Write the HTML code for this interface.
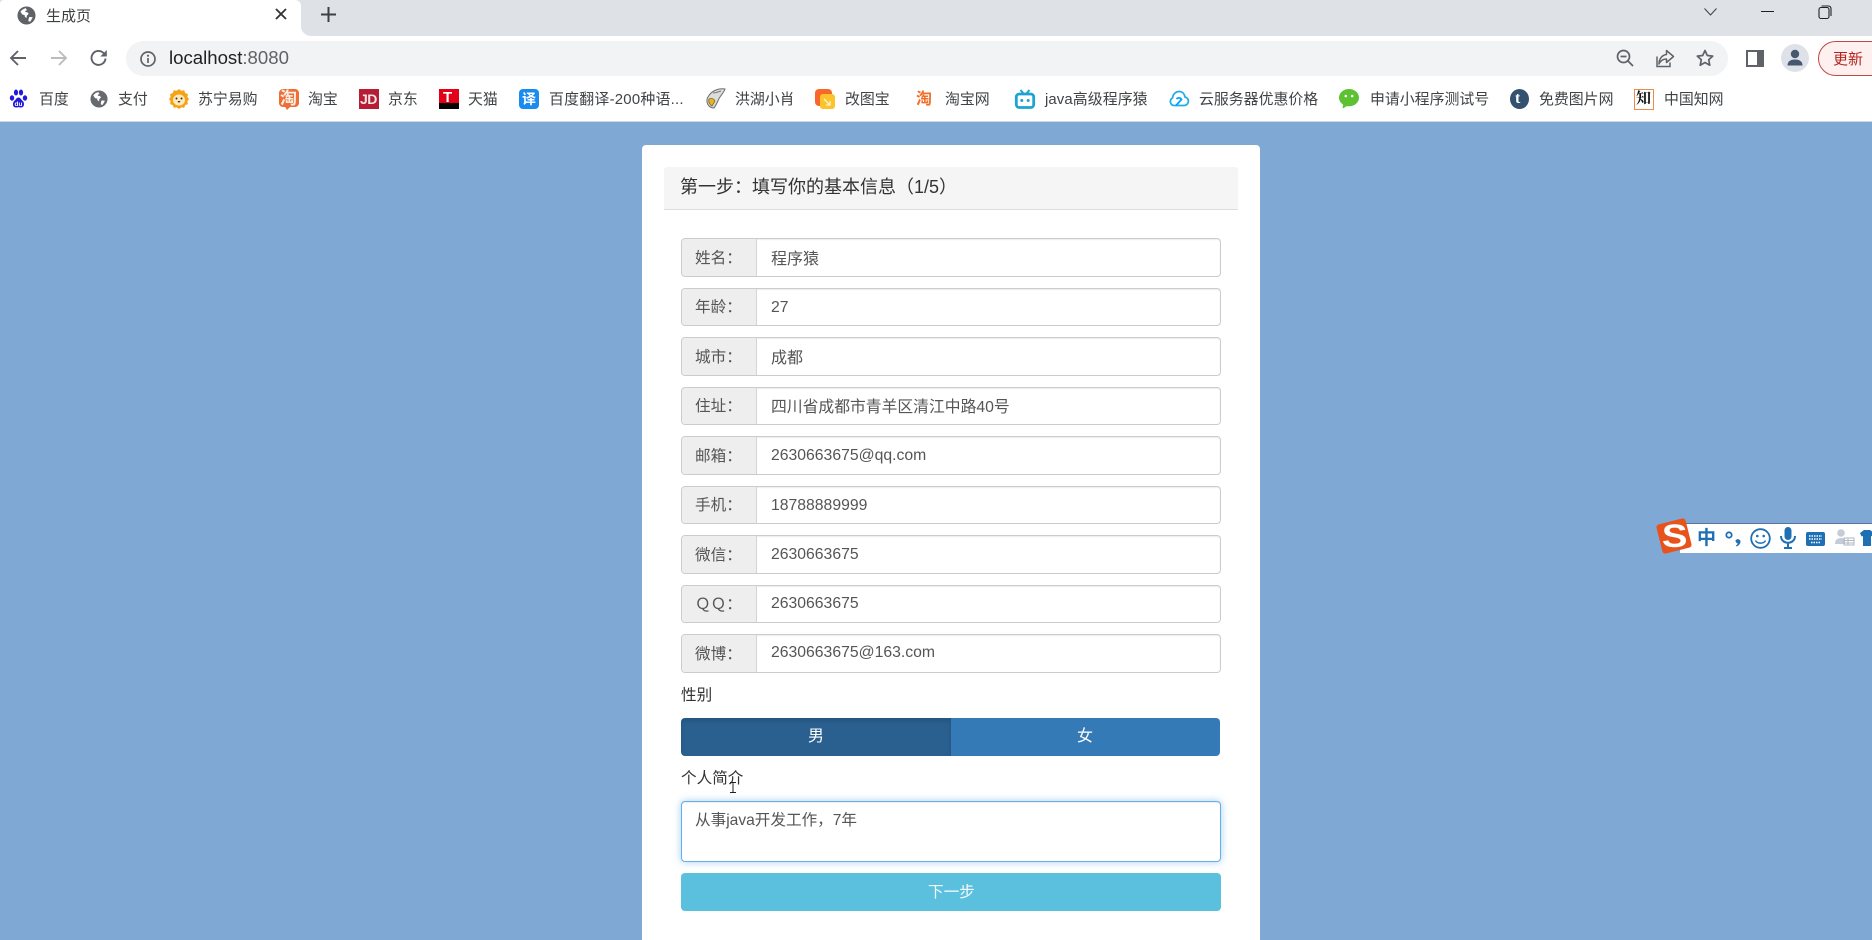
<!DOCTYPE html>
<html lang="zh">
<head>
<meta charset="utf-8">
<title>生成页</title>
<style>
html,body{margin:0;padding:0;width:1872px;height:940px;overflow:hidden}
body{position:relative;background:#7fa9d4;font-family:"Liberation Sans","Noto Sans CJK SC",sans-serif;color:#333}
.a{position:absolute}
.t{position:absolute;white-space:nowrap;line-height:1}
svg{position:absolute;overflow:visible}
.bm{position:absolute;top:91px;font-size:14.9px;line-height:18px;color:#3f4346;white-space:nowrap}
.row{position:absolute;left:681px;width:538px;background:#fff;border:1px solid #ccc;border-radius:4px;box-shadow:inset 0 1px 1px rgba(0,0,0,.075)}
.lab{position:absolute;left:0;top:0;bottom:0;width:74px;background:#eee;border-right:1px solid #d4d4d4;border-radius:3px 0 0 3px}
.lab span{position:absolute;left:13px;top:calc(50% + 1px);transform:translateY(-50%);font-size:15.6px;line-height:20px;color:#555;white-space:nowrap}
.val{position:absolute;left:89px;top:50%;transform:translateY(-50%);font-size:16px;line-height:20px;color:#555;white-space:nowrap}
.n{font-size:15.75px}
</style>
</head>
<body>
<!-- tab strip -->
<div class="a" style="left:0;top:0;width:1872px;height:36px;background:#dee1e6"></div>
<div class="a" style="left:0;top:0;width:301px;height:36px;background:#fff;border-radius:4px 6px 0 0"></div>
<div class="a" style="left:301px;top:26px;width:10px;height:10px;background:#fff"></div>
<div class="a" style="left:301px;top:26px;width:10px;height:10px;background:#dee1e6;border-radius:0 0 0 10px"></div>
<!-- toolbar -->
<div class="a" style="left:0;top:36px;width:1872px;height:86px;background:#fff"></div>
<div class="a" style="left:126px;top:41px;width:1602px;height:35px;background:#f1f3f4;border-radius:18px"></div>
<div class="a" style="left:0;top:121px;width:1872px;height:1px;background:#d0d8e2"></div>

<!-- tab content -->
<svg style="left:17px;top:6px" width="19" height="19" viewBox="0 0 20 20"><circle cx="10" cy="10" r="9.5" fill="#5f6368"/><path d="M9 2.2C7 3 5 4 3.6 6l2 3 2.4.6.3 1.800 1.800 1.200.2-2.400 2-2-1.400-1.600-2.200-.2L9 5l1.600-.6z M13 11.500l3.600.4-2.600 4.600-2-.4.2-2.600z" fill="#fff"/></svg>
<span class="t" style="left:46px;top:9px;font-size:15px;color:#3c4043">生成页</span>
<svg style="left:275px;top:8px" width="12" height="12" viewBox="0 0 12 12"><path d="M1 1l10 10M11 1L1 11" stroke="#303134" stroke-width="1.800" fill="none"/></svg>
<svg style="left:321px;top:7px" width="15" height="15" viewBox="0 0 15 15"><path d="M7.500 0v15M0 7.500h15" stroke="#3c4043" stroke-width="2" fill="none"/></svg>

<!-- window controls -->
<svg style="left:1704px;top:8px" width="13" height="8" viewBox="0 0 13 8"><path d="M.5.500l6 6.500 6-6.500" stroke="#3c4043" stroke-width="1" fill="none"/></svg>
<div class="a" style="left:1761px;top:11px;width:13px;height:1px;background:#202124"></div>
<svg style="left:1818px;top:5px" width="14" height="14" viewBox="0 0 14 14"><rect x="1" y="2.500" width="10" height="11" rx="2" fill="none" stroke="#202124" stroke-width="1.100"/><path d="M3.500 1h7a2.500 2.500 0 0 1 2.500 2.500V11" fill="none" stroke="#202124" stroke-width="1.100"/></svg>

<!-- nav -->
<svg style="left:9px;top:49px" width="18" height="18" viewBox="0 0 18 18"><path d="M17 9H2M9 2L2 9l7 7" stroke="#5f6368" stroke-width="1.900" fill="none"/></svg>
<svg style="left:50px;top:49px" width="18" height="18" viewBox="0 0 18 18"><path d="M1 9h15M9 2l7 7-7 7" stroke="#babcbe" stroke-width="1.900" fill="none"/></svg>
<svg style="left:90px;top:49px" width="18" height="18" viewBox="0 0 18 18"><path d="M15.500 9.500A7 7 0 1 1 13.500 4L16 6.500" stroke="#5f6368" stroke-width="1.900" fill="none"/><path d="M16.800 1v6.500h-6.500z" fill="#5f6368"/></svg>
<svg style="left:140px;top:51px" width="16" height="16" viewBox="0 0 16 16"><circle cx="8" cy="8" r="7" fill="none" stroke="#5f6368" stroke-width="1.700"/><path d="M8 7v5" stroke="#5f6368" stroke-width="1.700"/><circle cx="8" cy="4.700" r="1.100" fill="#5f6368"/></svg>
<span class="t" style="left:169px;top:48px;font-size:18.600px;line-height:20px;color:#202124">localhost<span style="color:#5f6368">:8080</span></span>

<svg style="left:1616px;top:49px" width="18" height="18" viewBox="0 0 18 18"><circle cx="7.500" cy="7.500" r="6" fill="none" stroke="#5f6368" stroke-width="1.700"/><path d="M4.500 7.500h6M12 12l5 5" stroke="#5f6368" stroke-width="1.700" fill="none"/></svg>
<svg style="left:1656px;top:49px" width="19" height="19" viewBox="0 0 19 19"><path d="M1 7.500V17.500h13v-4" fill="none" stroke="#5f6368" stroke-width="1.500"/><path d="M10.500 1.500l7 6-7 6V10C7 10 4.500 11.500 3 15c0-5 3-9 7.500-9.500z" fill="none" stroke="#5f6368" stroke-width="1.500" stroke-linejoin="round"/></svg>
<svg style="left:1696px;top:49px" width="18" height="18" viewBox="0 0 18 18"><path d="M9 1.500l2.300 5 5.400.6-4 3.700 1.100 5.400L9 13.500l-4.800 2.700 1.100-5.400-4-3.700 5.400-.6z" fill="none" stroke="#5f6368" stroke-width="1.700" stroke-linejoin="round"/></svg>
<svg style="left:1746px;top:50px" width="18" height="17" viewBox="0 0 18 17"><rect width="18" height="17" fill="#5f6368"/><rect x="2" y="2" width="9" height="13" fill="#fff"/></svg>
<div class="a" style="left:1781px;top:44px;width:28px;height:28px;border-radius:50%;background:#dfe1e8"></div>
<svg style="left:1787px;top:49px" width="16" height="17" viewBox="0 0 16 17"><circle cx="8" cy="5" r="4.200" fill="#45586f"/><path d="M.5 16.500c0-4.500 3.500-6 7.500-6s7.500 1.500 7.500 6z" fill="#45586f"/></svg>
<div class="a" style="left:1818px;top:41px;width:80px;height:33px;border:1px solid #bd4b45;border-radius:18px;background:#fdf0ef"></div>
<span class="t" style="left:1833px;top:52px;font-size:15px;color:#b3261e">更新</span>

<!-- bookmarks -->
<svg style="left:9px;top:89px" width="19" height="20" viewBox="0 0 19 20" fill="#2319dc"><ellipse cx="3" cy="9" rx="2.200" ry="2.700"/><ellipse cx="7" cy="3.500" rx="2.100" ry="3"/><ellipse cx="12" cy="3.500" rx="2.100" ry="3"/><ellipse cx="16" cy="9" rx="2.200" ry="2.700"/><path d="M9.500 8.500c-2 0-2.500 2-4 3.300-2 1.500-2.500 6.700 1.500 6.700 1 0 1.500-.4 2.500-.4s1.500.4 2.500.4c4 0 3.500-5.200 1.500-6.700-1.500-1.300-2-3.300-4-3.300z"/><text x="9.500" y="17" font-size="6.500" font-weight="700" fill="#fff" text-anchor="middle" font-family="Liberation Sans">du</text></svg>
<span class="bm" style="left:39px">百度</span>
<svg style="left:90px;top:90px" width="18" height="18" viewBox="0 0 20 20"><circle cx="10" cy="10" r="9.500" fill="#66696d"/><path d="M9 2.200C7 3 5 4 3.600 6l2 3 2.400.6.300 1.800 1.800 1.200.2-2.400 2-2-1.400-1.600-2.200-.2L9 5l1.600-.6z M13 11.500l3.600.4-2.600 4.600-2-.4.2-2.600z" fill="#fff"/></svg>
<span class="bm" style="left:118px">支付</span>
<svg style="left:169px;top:89px" width="20" height="20" viewBox="0 0 20 20"><path d="M10 0l2.300 1.800 2.900-.5 1 2.700 2.700 1.100-.5 2.900L20 10l-1.600 2.200.5 2.900-2.700 1-1 2.700-2.900-.4L10 20l-2.300-1.600-2.900.4-1-2.700-2.700-1 .5-2.900L0 10l1.600-2 -.5-2.900L3.800 4l1-2.700 2.900.5z" fill="#f5a314"/><ellipse cx="10" cy="11" rx="6" ry="5.500" fill="#fce9c0"/><circle cx="7.500" cy="9.500" r="1" fill="#4a3000"/><circle cx="12.500" cy="9.500" r="1" fill="#4a3000"/><path d="M8.500 12h3l-1.500 2z" fill="#4a3000"/></svg>
<span class="bm" style="left:198px">苏宁易购</span>
<div class="a" style="left:279px;top:89px;width:20px;height:18px;border-radius:4px;background:#ee6f35"></div>
<svg style="left:284px;top:105px" width="8" height="5" viewBox="0 0 8 5"><path d="M0 0h8L3 5z" fill="#ee6f35"/></svg>
<span class="t" style="left:280px;top:90px;font-size:17px;font-weight:700;color:#fdeee5">淘</span>
<span class="bm" style="left:308px">淘宝</span>
<div class="a" style="left:359px;top:89px;width:20px;height:20px;background:#b71d34"></div>
<span class="t" style="left:360px;top:92px;font-size:14px;font-weight:700;color:#f5e4e6;letter-spacing:-.5px">JD</span>
<span class="bm" style="left:388px">京东</span>
<div class="a" style="left:439px;top:89px;width:20px;height:14px;background:#e40019"></div>
<div class="a" style="left:439px;top:103px;width:20px;height:6px;background:#050505"></div>
<span class="t" style="left:443px;top:90px;font-size:15px;font-weight:700;color:#fff">T</span>
<span class="bm" style="left:468px">天猫</span>
<div class="a" style="left:519px;top:89px;width:20px;height:20px;border-radius:4px;background:#1a8cf0"></div>
<span class="t" style="left:522px;top:92px;font-size:14px;font-weight:700;color:#fff">译</span>
<span class="bm" style="left:549px;letter-spacing:.25px">百度翻译-200种语...</span>
<svg style="left:705px;top:88px" width="21" height="21" viewBox="0 0 21 21"><path d="M20 1C13 0 6 3 3 9c-2 3-1 7 1 9 1 1 3 2 5 2 3-4 4-8 6-11 2-3 4-5 5-8z" fill="#dcdcdc" stroke="#6b6b6b" stroke-width="1"/><path d="M4 11c3-1 5 0 6 2l-3 5c-2-1-4-4-3-7z" fill="#e8b521" stroke="#6b5a10" stroke-width=".7"/><path d="M8 5c2 0 5-1 8-2" stroke="#777" fill="none"/></svg>
<span class="bm" style="left:735px">洪湖小肖</span>
<div class="a" style="left:815px;top:89px;width:17px;height:17px;border-radius:4px;background:#f9682a"></div>
<div class="a" style="left:820px;top:94px;width:15px;height:15px;border-radius:3px;background:#fcc42c"></div>
<svg style="left:823px;top:98px" width="9" height="9" viewBox="0 0 9 9"><path d="M1 1l6 6M7 3v4H3" stroke="#fff2c8" stroke-width="1.300" fill="none"/></svg>
<span class="bm" style="left:845px">改图宝</span>
<span class="t" style="left:916px;top:92px;font-size:16px;font-weight:700;color:#f0702a">淘</span>
<span class="bm" style="left:945px">淘宝网</span>
<svg style="left:1015px;top:89px" width="20" height="20" viewBox="0 0 20 20"><path d="M5.500 1l3 3.500M14.500 1l-3 3.500" stroke="#1ba4d3" stroke-width="2"/><rect x="1.300" y="5" width="17.400" height="13.500" rx="3" fill="#fff" stroke="#1ba4d3" stroke-width="2.800"/><circle cx="6.800" cy="11.500" r="1.500" fill="#1ba4d3"/><circle cx="13.200" cy="11.500" r="1.500" fill="#1ba4d3"/></svg>
<span class="bm" style="left:1045px;letter-spacing:.1px">java高级程序猿</span>
<svg style="left:1169px;top:90px" width="20" height="17" viewBox="0 0 20 17"><path d="M5 15.500A4 4 0 0 1 3.500 8C4 4 7 1.500 10 1.500c3.500 0 5.500 2.500 6 5.500a4.300 4.300 0 0 1-1 8.500z" fill="none" stroke="#23ade5" stroke-width="1.800"/><path d="M7 15.500l5.500-6a3 3 0 0 0-5-.5" fill="none" stroke="#00a4ff" stroke-width="1.800"/></svg>
<span class="bm" style="left:1199px">云服务器优惠价格</span>
<svg style="left:1339px;top:89px" width="20" height="20" viewBox="0 0 20 20"><path d="M10 0C4.500 0 0 3.800 0 8.600c0 3 1.700 5.400 4.200 7l-.7 4 4.200-2.500c.8.200 1.500.2 2.300.2 5.500 0 10-3.900 10-8.700S15.500 0 10 0z" fill="#5cc232"/><circle cx="6.800" cy="7" r="1.300" fill="#fff"/><circle cx="13.200" cy="7" r="1.300" fill="#fff"/></svg>
<span class="bm" style="left:1370px">申请小程序测试号</span>
<div class="a" style="left:1510px;top:89px;width:19px;height:20px;border-radius:50%;background:#34526f"></div>
<span class="t" style="left:1515px;top:91px;font-size:16px;font-weight:700;color:#fff;font-family:'Liberation Serif',serif">t</span>
<span class="bm" style="left:1539px">免费图片网</span>
<div class="a" style="left:1634px;top:89px;width:18px;height:19px;border:1px solid #ee8a4b;background:#fff"></div>
<span class="t" style="left:1636px;top:92px;font-size:15px;font-weight:700;color:#111;font-family:'Liberation Serif','Noto Serif CJK SC',serif">知</span>
<span class="bm" style="left:1664px">中国知网</span>

<!-- card -->
<div class="a" style="left:642px;top:145px;width:618px;height:795px;background:#fff;border-radius:4px 4px 0 0"></div>
<div class="a" style="left:664px;top:167px;width:574px;height:42px;background:#f5f5f5;border-bottom:1px solid #ddd;border-radius:3px 3px 0 0"></div>
<span class="t" style="left:680px;top:177px;font-size:18px;line-height:20px;color:#333">第一步：填写你的基本信息（1/5）</span>

<div class="row" style="top:238px;height:37px"><div class="lab"><span>姓名：</span></div><span class="val" style="margin-top:2px">程序猿</span></div>
<div class="row" style="top:288px;height:36px"><div class="lab"><span>年龄：</span></div><span class="val n" style="margin-top:1px">27</span></div>
<div class="row" style="top:337px;height:37px"><div class="lab"><span>城市：</span></div><span class="val" style="margin-top:2px">成都</span></div>
<div class="row" style="top:387px;height:36px"><div class="lab"><span>住址：</span></div><span class="val" style="font-size:15.800px;margin-top:2px">四川省成都市青羊区清江中路40号</span></div>
<div class="row" style="top:436px;height:37px"><div class="lab"><span>邮箱：</span></div><span class="val n" style="margin-top:0">2630663675@qq.com</span></div>
<div class="row" style="top:486px;height:36px"><div class="lab"><span>手机：</span></div><span class="val n" style="margin-top:1px">18788889999</span></div>
<div class="row" style="top:535px;height:37px"><div class="lab"><span>微信：</span></div><span class="val n" style="margin-top:0">2630663675</span></div>
<div class="row" style="top:585px;height:36px"><div class="lab"><span>ＱＱ：</span></div><span class="val n">2630663675</span></div>
<div class="row" style="top:634px;height:37px"><div class="lab"><span>微博：</span></div><span class="val n" style="margin-top:-1px">2630663675@163.com</span></div>

<span class="t" style="left:681px;top:686px;font-size:15.600px;line-height:20px;color:#333">性别</span>
<div class="a" style="left:681px;top:718px;width:270px;height:38px;background:#2a6090;border-radius:4px 0 0 4px;box-shadow:inset 0 3px 5px rgba(0,0,0,.125)"></div>
<div class="a" style="left:951px;top:718px;width:269px;height:38px;background:#337ab7;border-radius:0 4px 4px 0"></div>
<span class="t" style="left:808px;top:727px;font-size:16px;line-height:20px;color:#fff">男</span>
<span class="t" style="left:1077px;top:727px;font-size:16px;line-height:20px;color:#fff">女</span>
<span class="t" style="left:681px;top:769px;font-size:15.600px;line-height:20px;color:#333">个人简介</span>
<svg style="left:729px;top:782px" width="8" height="11" viewBox="0 0 8 11"><path d="M1 .5h6M1 10.500h6M4 .5v10" stroke="#222" stroke-width="1" fill="none"/></svg>
<div class="a" style="left:681px;top:801px;width:538px;height:59px;background:#fff;border:1px solid #66afe9;border-radius:4px;box-shadow:inset 0 1px 1px rgba(0,0,0,.075),0 0 8px rgba(102,175,233,.6)"></div>
<span class="t" style="left:695px;top:810px;font-size:15.600px;line-height:22px;color:#555">从事java开发工作，7年</span>
<div class="a" style="left:681px;top:873px;width:540px;height:38px;background:#5bc0de;border-radius:4px"></div>
<span class="t" style="left:928px;top:883px;font-size:15.600px;line-height:20px;color:#f4fbfd">下一步</span>

<!-- sogou ime -->
<div class="a" style="left:1680px;top:523px;width:192px;height:29px;background:#fff;border-top:1px solid #56779c"></div>
<div class="a" style="left:1659px;top:521px;width:30px;height:30px;background:#e8531c;border-radius:3px;transform:rotate(-14deg)"></div>
<span class="t" style="left:1664px;top:520px;font-size:32px;font-weight:700;color:#fff;transform:scaleX(1.200)">S</span>
<span class="t" style="left:1697px;top:529px;font-size:19px;font-weight:700;color:#1f6fb5">中</span>
<svg style="left:1725px;top:531px" width="17" height="16" viewBox="0 0 17 16"><circle cx="4" cy="4" r="2.700" fill="none" stroke="#1f6fb5" stroke-width="1.800"/><path d="M10.500 9.500a2.700 2.700 0 0 1 5 1c0 2-1.500 4-4 5l-.6-1c1-.6 1.600-1.300 1.700-2.300a2.500 2.500 0 0 1-2.100-2.700z" fill="#1f6fb5"/></svg>
<svg style="left:1750px;top:528px" width="21" height="21" viewBox="0 0 21 21"><circle cx="10.500" cy="10.500" r="9.300" fill="none" stroke="#1f6fb5" stroke-width="1.800"/><circle cx="7.300" cy="8" r="1.300" fill="#1f6fb5"/><circle cx="13.700" cy="8" r="1.300" fill="#1f6fb5"/><path d="M5.500 12.500c1.500 3.500 8.500 3.500 10 0" fill="none" stroke="#1f6fb5" stroke-width="1.500"/></svg>
<svg style="left:1780px;top:527px" width="16" height="22" viewBox="0 0 16 22"><rect x="4.500" y="0" width="7" height="13" rx="3.500" fill="#1f6fb5"/><path d="M1 9c0 9 14 9 14 0M8 15v5M4 21h8" fill="none" stroke="#1f6fb5" stroke-width="2"/></svg>
<svg style="left:1806px;top:532px" width="19" height="14" viewBox="0 0 19 14"><rect width="19" height="14" rx="2" fill="#1f6fb5"/><path d="M3 4h13M3 7h13M5 10.500h9" stroke="#fff" stroke-width="1.600" stroke-dasharray="1.500 1"/></svg>
<svg style="left:1834px;top:529px" width="21" height="19" viewBox="0 0 21 19"><circle cx="7" cy="4" r="3.800" fill="#c4ccd8"/><path d="M1 15c0-4 2-6 6-6 2 0 3 .5 4 1v5z" fill="#c4ccd8"/><path d="M10 9h10v7H10zM10 11.500h10M10 14h10M14 9v7" fill="none" stroke="#aeb7c4" stroke-width="1"/></svg>
<svg style="left:1860px;top:530px" width="14" height="16" viewBox="0 0 14 16"><path d="M4 0h6l4 3-1.500 3.500L11 6v10H3V6l-1.500.5L0 3z" fill="#1f6fb5"/></svg>
</body>
</html>
